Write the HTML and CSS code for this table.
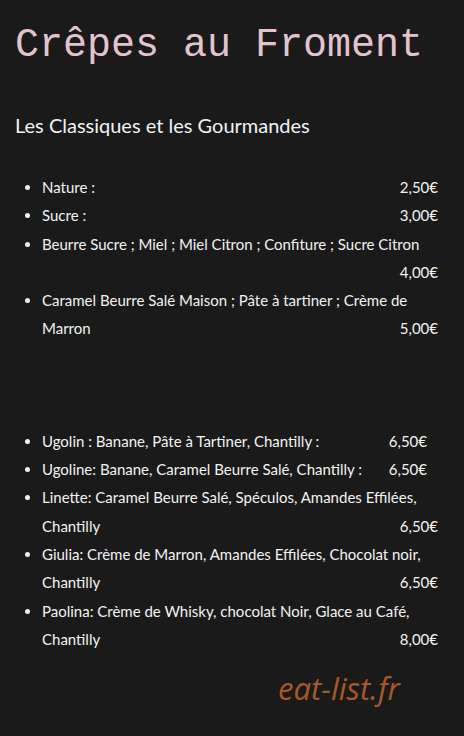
FILE: index.html
```html
<!DOCTYPE html>
<html lang="fr">

<head>
    <meta charset="UTF-8">
    <meta name="viewport" content="width=device-width, initial-scale=1.0">
    <title>Crêpes au Froment</title>
    <link rel="stylesheet" href="styles.css">
</head>

<body>
    <div class="menu">
        <h1>Crêpes au Froment</h1>
        <h2>Les Classiques et les Gourmandes</h2>

        <ul class="carte">
            <li><div class="line"><span>Nature :</span><span class="prix">2,50€</span></div></li>
            <li><div class="line"><span>Sucre :</span><span class="prix">3,00€</span></div></li>
            <li>
                <div class="line"><span>Beurre Sucre ; Miel ; Miel Citron ; Confiture ; Sucre Citron</span></div>
                <div class="line"><span></span><span class="prix">4,00€</span></div>
            </li>
            <li>
                <div class="line"><span>Caramel Beurre Salé Maison ; Pâte à tartiner ; Crème de</span></div>
                <div class="line"><span>Marron</span><span class="prix">5,00€</span></div>
            </li>
        </ul>

        <ul class="carte gourmandes">
            <li><div class="line short"><span>Ugolin : Banane, Pâte à Tartiner, Chantilly :</span><span class="prix">6,50€</span></div></li>
            <li><div class="line short"><span>Ugoline: Banane, Caramel Beurre Salé, Chantilly :</span><span class="prix">6,50€</span></div></li>
            <li>
                <div class="line"><span>Linette: Caramel Beurre Salé, Spéculos, Amandes Effilées,</span></div>
                <div class="line"><span>Chantilly</span><span class="prix">6,50€</span></div>
            </li>
            <li>
                <div class="line"><span>Giulia: Crème de Marron, Amandes Effilées, Chocolat noir,</span></div>
                <div class="line"><span>Chantilly</span><span class="prix">6,50€</span></div>
            </li>
            <li>
                <div class="line"><span>Paolina: Crème de Whisky, chocolat Noir, Glace au Café,</span></div>
                <div class="line"><span>Chantilly</span><span class="prix">8,00€</span></div>
            </li>
        </ul>

        <div class="watermark">eat-list.fr</div>
    </div>
</body>

</html>
```

FILE: styles.css
```css
body {
    margin: 0;
    background-color: #1a1a1a;
    color: #f2f2f2;
    font-family: Lato, "Open Sans", sans-serif;
}

.menu {
    padding: 0 26px 0 15px;
}

h1 {
    font-family: "Liberation Mono", "Courier New", monospace;
    font-weight: normal;
    font-size: 40px;
    line-height: 48px;
    color: #e2c3cf;
    margin: 22px 0 0 0;
}

h2 {
    font-weight: normal;
    font-size: 20px;
    line-height: 24px;
    margin: 43px 0 0 0;
}

.carte {
    margin: 36px 0 0 0;
    padding-left: 27px;
    font-size: 15px;
    line-height: 28.3px;
}

.gourmandes {
    margin-top: 84px;
}

.line {
    display: flex;
    justify-content: space-between;
    white-space: nowrap;
}

.line.short {
    padding-right: 11px;
}

.prix {
    margin-left: 6px;
}

.watermark {
    font-family: "Open Sans", sans-serif;
    font-style: italic;
    font-size: 31px;
    color: #a9582c;
    margin: 14px 0 0 263px;
}
```
